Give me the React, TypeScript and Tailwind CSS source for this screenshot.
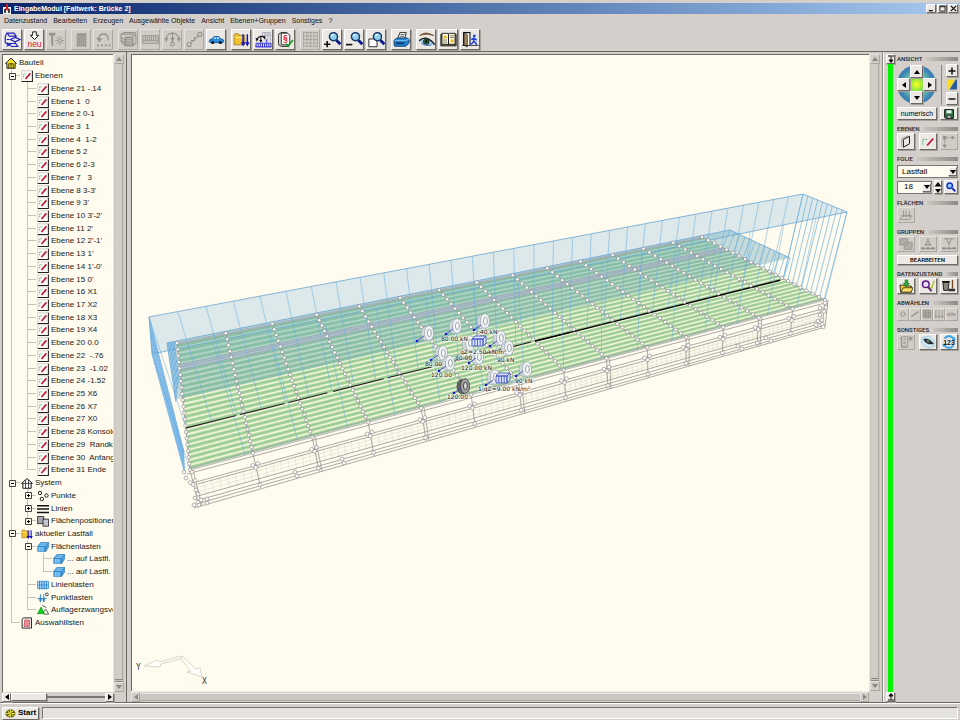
import React from "react";

type Pt = [number, number];
type Kids = { children?: React.ReactNode };

/* ------------------------------------------------------------------ */
/* Shared controls                                                     */
/* ------------------------------------------------------------------ */

const RAISED =
  "border border-t-white border-l-white border-r-[#6d6a65] border-b-[#6d6a65] bg-[#ece9e4] shadow-[1px_1px_0_#a5a29c]";
const FLAT =
  "border border-t-[#e6e3de] border-l-[#e6e3de] border-r-[#aaa7a1] border-b-[#aaa7a1] bg-[#d1cdc6]";

function Btn({
  label,
  off,
  className = "",
  children,
}: Kids & { label: string; off?: boolean; className?: string }) {
  return (
    <button
      type="button"
      aria-label={label}
      disabled={off}
      className={`flex shrink-0 items-center justify-center overflow-hidden ${off ? FLAT : RAISED} ${className}`}
    >
      {children}
    </button>
  );
}

function Ico({ children, className = "h-4 w-4" }: Kids & { className?: string }) {
  return (
    <svg viewBox="0 0 16 16" className={`${className} shrink-0`} fill="none" stroke="#111" aria-hidden="true">
      {children}
    </svg>
  );
}

function Arrow({ dir, off }: { dir: "up" | "down" | "left" | "right"; off?: boolean }) {
  const d = {
    up: "M1 6 L4 2 L7 6Z",
    down: "M1 2 L4 6 L7 2Z",
    left: "M6 1 L2 4 L6 7Z",
    right: "M2 1 L6 4 L2 7Z",
  }[dir];
  return (
    <svg viewBox="0 0 8 8" className="h-2 w-2 shrink-0" aria-hidden="true">
      <path d={d} fill={off ? "#8a8781" : "#000"} />
    </svg>
  );
}

/* ------------------------------------------------------------------ */
/* Toolbar icons                                                       */
/* ------------------------------------------------------------------ */

const G = "#95928c";

const Magnifier = ({ x = 0, y = 0 }: { x?: number; y?: number }) => (
  <g transform={`translate(${x} ${y})`}>
    <path d="M8 8 L12 12" stroke="#0a1a8c" strokeWidth="2.6" />
    <circle cx="5.5" cy="5" r="3.8" fill="#8fd0ee" stroke="#163a6a" strokeWidth="1.4" />
    <path d="M3.6 4.6 A2.2 2.2 0 0 1 5.8 2.8" stroke="#fff" strokeWidth="1" />
  </g>
);

const FolderArrows = () => (
  <>
    <path d="M1 4 V13 H11 V4 H6 L5 2.6 H2Z" fill="#f2c230" stroke="#8a6a10" strokeWidth=".7" />
    <path d="M1.6 6 H10" stroke="#ffe88a" />
    <path d="M9.5 3 V13 M13.5 3 V13" stroke="#1010c8" strokeWidth="1.4" />
    <path d="M7.4 10.5 H11.6 L9.5 14.5Z M11.4 10.5 H15.6 L13.5 14.5Z" fill="#1010c8" stroke="none" />
  </>
);

const icons: Record<string, React.ReactNode> = {
  flow: (
    <g stroke="#2222b8" strokeWidth="1.1">
      <path d="M3 2 H9.5 L11.5 4.8 H5Z M6 8 L10.5 6 L15 8 L10.5 10.2Z M5 11.8 H11 L13 14.6 H7Z" />
      <path d="M3 2 L1.2 5 V11 L4.5 13.2 M10.5 5 V6 M10.5 10 V11.8 M5 8 H2.5 M3 11 L5 13.2 L2.4 14.4" />
    </g>
  ),
  neu: (
    <>
      <path d="M6.3 0.8 H9.7 V4 H12 L8 8 L4 4 H6.3Z" fill="#fff" strokeWidth=".9" />
      <text x="8" y="15" textAnchor="middle" fontSize="8" fill="#e01818" stroke="none" fontFamily="Liberation Sans, sans-serif">
        neu
      </text>
    </>
  ),
  hammer: (
    <g stroke={G}>
      <path d="M1 3 H7" strokeWidth="2.6" />
      <path d="M4 3 V14" strokeWidth="1.8" />
      <path d="M11 4.5 V7 M11 11 V13.5 M6.8 9 H9 M13 9 H15.4 M8 6 L9.6 7.6 M12.4 10.4 L14 12 M14 6 L12.4 7.6 M9.6 10.4 L8 12" strokeWidth=".9" />
      <circle cx="11" cy="9" r="1.4" strokeWidth=".9" />
    </g>
  ),
  trash: (
    <g stroke={G}>
      <path d="M4 4.5 H12 V14 H4Z" fill="#a8a59f" />
      <path d="M3.5 3 H12.5" strokeWidth="1.6" />
      <path d="M6 6 V13 M8 6 V13 M10 6 V13" strokeWidth=".7" />
    </g>
  ),
  turn: (
    <g stroke={G}>
      <path d="M4 9 A4.4 4.4 0 1 1 12 9" strokeWidth="1.3" />
      <path d="M1.6 6.6 L4 10.4 L6.4 7.2Z" fill={G} strokeWidth=".5" />
      <path d="M2 13.5 H14.5" strokeWidth="1.8" strokeDasharray="1.8 1.8" />
    </g>
  ),
  slabs: (
    <g stroke={G}>
      <path d="M1 3 L4 1.5 H14 L15 4 V11 L12 14 H5 L1 10Z M1 3 H11 L15 5 M5 6 H12 V13 M5 6 V13 M5 8.5 H12 M5 11 H12 M1 6 L5 8.5 M1 8.5 L5 11" />
      <path d="M5 6 H12 V13 H5Z M5 8.3 H12 M5 10.6 H12" fill="#bbb8b2" />
    </g>
  ),
  beam: (
    <g stroke={G}>
      <path d="M.8 4.5 H15.2 V11.5 H.8Z M.8 9.2 H15.2" />
      <path d="M3 5 V9 M5 5 V9 M7 5 V9 M9 5 V9 M11 5 V9 M13 5 V9" />
    </g>
  ),
  swing: (
    <g stroke={G}>
      <path d="M2 8 A6 6 0 0 1 14 8 M8 1 V10" />
      <path d="M.5 6.5 L3.8 7 L2 10Z M15.5 6.5 L12.2 7 L14 10Z M6 6.5 H10 L8 10Z" fill={G} strokeWidth=".4" />
      <circle cx="8" cy="12.4" r="1.7" />
    </g>
  ),
  nodes: (
    <g stroke={G}>
      <circle cx="3" cy="12.8" r="1.9" />
      <circle cx="13" cy="3.2" r="1.9" />
      <path d="M4.4 11.4 L11.6 4.6" />
      <path d="M8 5.4 V9 H4.6" />
    </g>
  ),
  car: (
    <>
      <path d="M1 9.8 Q1 7.6 4 7.3 L5.6 5.2 H10.2 L12 7.3 Q15 7.6 15 9.8 L14 11 H2Z" fill="#2c8cdc" stroke="#0b4a8a" strokeWidth=".7" />
      <path d="M5.2 7.3 L6.3 5.9 H7.5 V7.3Z M8.3 7.3 V5.9 H9.8 L10.9 7.3Z" fill="#cfeaff" stroke="none" />
      <circle cx="4.4" cy="10.8" r="1.5" fill="#111" stroke="none" />
      <circle cx="11.6" cy="10.8" r="1.5" fill="#111" stroke="none" />
    </>
  ),
  folder: <FolderArrows />,
  moving: (
    <>
      <path d="M7 1.5 H14.5 V10 M7 1.5 V5 M9.5 1.5 V9 M12 1.5 V9 M7 4 H14.5" stroke="#9a9ab0" strokeWidth=".7" />
      <path d="M2 8 A4 4 0 0 1 8.5 6 M5.5 5 V10" strokeWidth="1" />
      <path d="M.5 6.6 L3.4 7.2 L1.6 10Z M7 5.5 L9.6 8 L9.6 4.6Z M4 8.5 H7 L5.5 11Z" fill="#111" stroke="none" />
      <path d="M1 15 V11.5 H15 V15 M3 12 V15 M5 12 V15 M7 12 V15 M9 12 V15 M11 12 V15 M13 12 V15 M.5 15 H15.5 M11 8 V11" stroke="#2222e0" strokeWidth=".9" />
    </>
  ),
  norm: (
    <>
      <path d="M1.5 4 V13 L4 14.5 H11 V4.5 L9 1.5 H4 L1.5 3Z" fill="#e6e6e0" strokeWidth=".8" />
      <path d="M4 2 H10 L12 4 V13 H4Z" fill="#fff" strokeWidth=".8" />
      <text x="7.8" y="9.6" textAnchor="middle" fontSize="8" fontWeight="700" fill="#e01818" stroke="none" fontFamily="Liberation Sans, sans-serif">
        §
      </text>
      <path d="M8.2 12 L10.5 14.3 L15 8.5" stroke="#18a028" strokeWidth="1.6" />
    </>
  ),
  grid: (
    <path
      d="M1 1.5 H15 M1 4.8 H15 M1 8 H15 M1 11.2 H15 M1 14.5 H15 M1.5 1 V15 M4.8 1 V15 M8 1 V15 M11.2 1 V15 M14.5 1 V15"
      stroke={G}
      strokeWidth=".8"
      strokeDasharray="1.5 .8"
    />
  ),
  zoomIn: (
    <>
      <Magnifier x={3.4} y={0.4} />
      <path d="M0 12.4 H6 M3 9.4 V15.4" strokeWidth="1.5" />
    </>
  ),
  zoomOut: (
    <>
      <Magnifier x={3.4} y={0.4} />
      <path d="M0 12.8 H6" strokeWidth="1.5" />
    </>
  ),
  zoomBox: (
    <>
      <path d="M.8 7.5 H8.5 V14.8 H.8Z" fill="#fff" strokeWidth=".8" />
      <Magnifier x={3.4} y={0.4} />
    </>
  ),
  printer: (
    <>
      <path d="M4.5 7 L6.5 1.5 H12.5 L11 7Z" fill="#fff" strokeWidth=".8" />
      <path d="M7 3.4 H11 M6.4 5 H10.4" strokeWidth=".6" />
      <path d="M1 8.5 L4 6.5 H13 L15.2 7.6 V11.4 L12 14.4 H1.6 L1 13Z" fill="#1f7cc8" stroke="#0b3a6a" strokeWidth=".8" />
      <path d="M1.4 8.8 H12 L15 7.8" stroke="#8ccdf4" strokeWidth=".9" />
      <path d="M3 11.6 H10.5" stroke="#0b2a50" strokeWidth="1.3" />
    </>
  ),
  eye: (
    <>
      <path d="M1.5 4.2 Q7 -.6 15 4.4 Q8.5 1.6 1.5 4.2Z" fill="#6a4422" stroke="#6a4422" strokeWidth=".6" />
      <path d="M1 9.5 Q7 4 13.5 10.4 Q15 11.6 15.5 13 Q8 15 3.5 11.8Z" fill="#a8c8e8" stroke="none" />
      <path d="M1 9.2 Q7 3.8 13.5 10.2 Q15 11.6 15.5 13" strokeWidth="1.3" />
      <circle cx="7.8" cy="10" r="2.7" fill="#2a6a3a" stroke="#112" strokeWidth=".7" />
      <circle cx="7.8" cy="9.8" r="1.1" fill="#000" stroke="none" />
      <path d="M3.5 11.8 Q8 14.6 12.5 13" stroke="#4a7ab8" strokeWidth="1" />
    </>
  ),
  book: (
    <>
      <path d="M.8 3 H15.2 V14 H.8Z" fill="#8a7a48" strokeWidth=".8" />
      <path d="M1.8 2.2 H7.5 L8 3 L8.5 2.2 H14.2 V12.5 H8.6 L8 13.2 L7.4 12.5 H1.8Z" fill="#fff8d8" strokeWidth=".8" />
      <path d="M8 3 V13" strokeWidth=".9" />
      <path d="M3.2 4.5 H6.2 V7 H3.2Z M10 8 H12.8 V10.5 H10Z" fill="#e8b820" stroke="none" />
      <path d="M3 8.5 H6.5 M3 10.5 H6.5 M9.6 4.5 H13 M9.6 6.2 H13" stroke="#666" strokeWidth=".8" />
    </>
  ),
  exit: (
    <>
      <path d="M1.5 13.5 V1.5 H7.5 V13.5" fill="#fff" strokeWidth="1" />
      <path d="M2 2 L5 3.5 V15 L2 13.5Z" fill="#a88a58" strokeWidth=".6" />
      <path d="M0 13.6 H15.8" strokeWidth=".7" />
      <circle cx="11.6" cy="4.6" r="1.3" fill="#2244d8" stroke="none" />
      <path d="M11.4 6 L11 9.6 L13 11.2 L13.6 13.4 M11 9.6 L9.8 11.4 L7.8 12.6 M8.6 8.2 L11.2 6.8 L14 8.6" stroke="#2244d8" strokeWidth="1.4" />
    </>
  ),
};

type Tool = [string, string, boolean?];
const toolGroups: Tool[][] = [
  [["flow", "Ablauf"], ["neu", "Neu"], ["hammer", "Bearbeiten", true]],
  [["trash", "Löschen", true], ["turn", "Rückgängig", true]],
  [
    ["slabs", "Platten", true],
    ["beam", "Balken", true],
    ["swing", "Drehen", true],
    ["nodes", "Knoten", true],
    ["car", "Verkehrslast"],
  ],
  [["folder", "Lastfall"], ["moving", "Lastzug"], ["norm", "Norm"]],
  [["grid", "Raster", true], ["zoomIn", "Vergrößern"], ["zoomOut", "Verkleinern"], ["zoomBox", "Ausschnitt"]],
  [["printer", "Drucken"]],
  [["eye", "Anzeigen"], ["book", "Handbuch"], ["exit", "Beenden"]],
];

const menus = [
  "Datenzustand",
  "Bearbeiten",
  "Erzeugen",
  "Ausgewählte Objekte",
  "Ansicht",
  "Ebenen+Gruppen",
  "Sonstiges",
  "?",
];

/* ------------------------------------------------------------------ */
/* Object tree                                                         */
/* ------------------------------------------------------------------ */

const PlaneIcon = () => (
  <>
    <path d="M1 1 H15.5 V15.5 H1Z" fill="#fbfaf6" stroke="#b8b5ae" strokeWidth=".8" />
    <path d="M1 15.2 H15.2 V1" stroke="#222" strokeWidth="1.4" />
    <path d="M3.5 10 V5 H7.5" stroke="#58c070" strokeWidth="1.2" strokeDasharray="2 1" />
    <path d="M6 12 L12.5 4.5" stroke="#c01830" strokeWidth="2.2" />
  </>
);

const LoadBlock = () => (
  <>
    <path d="M1 7 L5 2 H15.5 V8 L11.5 14 H1Z" fill="#4aa4e4" stroke="#1c6cac" strokeWidth=".8" />
    <path d="M1 7 H11.5 V14 M11.5 7 L15.5 2" stroke="#1c6cac" strokeWidth=".8" />
    <path d="M3 8 V14 M5.5 8 V14 M8 8 V14" stroke="#bfe4ff" strokeWidth=".9" />
    <path d="M3 5.8 H12 M5 3.8 H14" stroke="#bfe4ff" strokeWidth=".7" />
  </>
);

const treeIcons: Record<string, React.ReactNode> = {
  house: (
    <>
      <path d="M.8 8.5 L8 1.5 L15.2 8.5 H13.5 V15 H2.5 V8.5Z" fill="#f6e020" stroke="#222" strokeWidth="1.3" />
      <path d="M5 9 H11 V15 M5 9 V15 M8 9 V15" strokeWidth="1" />
    </>
  ),
  plane: <PlaneIcon />,
  system: (
    <>
      <path d="M.8 8.5 L8 2 L15.2 8.5 H13.5 V15 H2.5 V8.5Z" fill="#fff" strokeWidth="1.3" />
      <path d="M2.5 8.5 H13.5 M6 4 V15 M10 4 V15" strokeWidth="1" />
    </>
  ),
  points: (
    <g strokeWidth="1.2">
      <circle cx="4" cy="4" r="2.3" />
      <circle cx="12.6" cy="7.4" r="2.3" />
      <circle cx="6.5" cy="12" r="2.3" />
    </g>
  ),
  lines: <path d="M0 3.5 H16 M0 8 H16 M0 12.5 H16" strokeWidth="2" />,
  areas: (
    <g strokeWidth="1">
      <path d="M.8 2 H9 V11.5 H.8Z" fill="#a8a8b0" />
      <path d="M8 5.5 H15.4 V15 H8Z" fill="#c4c4cc" />
    </g>
  ),
  folder: <FolderArrows />,
  block: <LoadBlock />,
  lineload: (
    <g stroke="#2a86cc" strokeWidth="1">
      <path d="M.6 3 H15.4 V12.5 H.6Z" fill="#bfe2f8" />
      <path d="M3.5 3 V14 M6.5 3 V14 M9.5 3 V14 M12.5 3 V14" strokeWidth="1.4" />
      <path d="M0 8 H16" />
    </g>
  ),
  pointload: (
    <>
      <path d="M4.5 3 V13 M9 3 V13 M.5 8.5 H13" stroke="#1c7cc4" strokeWidth="1.2" />
      <path d="M2.5 9.5 H6.5 L4.5 14Z M7 9.5 H11 L9 14Z" fill="#1c7cc4" stroke="none" />
      <circle cx="13.2" cy="3.2" r="1.9" />
    </>
  ),
  support: (
    <>
      <path d="M.5 13 L5.5 4 L10 13Z" fill="#10d020" stroke="#0a8a14" strokeWidth=".8" />
      <path d="M8.5 11 L12 7 L15.5 13.5 H9.5 M7 2 L12.5 4.5" strokeWidth=".9" />
    </>
  ),
  list: (
    <>
      <path d="M3 1.2 H14 V14.8 H1.5 V3Z" fill="#fff" strokeWidth="1.2" />
      <path d="M5 4 H11.5 V12.5 H4Z" fill="#e89098" stroke="#c02030" strokeWidth=".8" />
    </>
  ),
};

/* Guides: t = tee, e = end, v = vertical; a + or - prefix adds the toggle box */
type Row = { icon: string; text: string; guides: string[] };

const planes = [
  "Ebene 21 -.14", "Ebene 1  0", "Ebene 2 0-1", "Ebene 3  1", "Ebene 4  1-2", "Ebene 5 2", "Ebene 6 2-3",
  "Ebene 7   3", "Ebene 8 3-3'", "Ebene 9 3'", "Ebene 10 3'-2'", "Ebene 11 2'", "Ebene 12 2'-1'", "Ebene 13 1'",
  "Ebene 14 1'-0'", "Ebene 15 0'", "Ebene 16 X1", "Ebene 17 X2", "Ebene 18 X3", "Ebene 19 X4", "Ebene 20 0.0",
  "Ebene 22  -.76", "Ebene 23  -1.02", "Ebene 24 -1.52", "Ebene 25 X6", "Ebene 26 X7", "Ebene 27 X0",
  "Ebene 28 Konsole", "Ebene 29  Randkappe", "Ebene 30  Anfang", "Ebene 31 Ende",
];

const rows: Row[] = [
  { icon: "house", text: "Bauteil", guides: [] },
  { icon: "plane", text: "Ebenen", guides: ["-t"] },
  ...planes.map((text, i) => ({ icon: "plane", text, guides: ["v", i === planes.length - 1 ? "e" : "t"] })),
  { icon: "system", text: "System", guides: ["-t"] },
  { icon: "points", text: "Punkte", guides: ["v", "+t"] },
  { icon: "lines", text: "Linien", guides: ["v", "+t"] },
  { icon: "areas", text: "Flächenpositionen", guides: ["v", "+e"] },
  { icon: "folder", text: "aktueller Lastfall", guides: ["-t"] },
  { icon: "block", text: "Flächenlasten", guides: ["v", "-t"] },
  { icon: "block", text: "... auf Lastfl.", guides: ["v", "v", "t"] },
  { icon: "block", text: "... auf Lastfl.", guides: ["v", "v", "e"] },
  { icon: "lineload", text: "Linienlasten", guides: ["v", "t"] },
  { icon: "pointload", text: "Punktlasten", guides: ["v", "t"] },
  { icon: "support", text: "Auflagerzwangsverf.", guides: ["v", "e"] },
  { icon: "list", text: "Auswahllisten", guides: ["e"] },
];

function Guide({ kind }: { kind: string }) {
  const shape = kind[kind.length - 1];
  const box = kind.length > 1 ? kind[0] : "";
  return (
    <span className="relative flex h-full w-4 shrink-0">
      <span className={`w-2 border-r border-[#c5c2ba] ${shape === "e" ? "h-1/2" : "h-full"}`} />
      <span className={`h-1/2 w-2 ${shape === "v" ? "" : "border-b border-[#c5c2ba]"}`} />
      {box && (
        <svg viewBox="0 0 7 7" className="absolute inset-0 m-auto h-[7px] w-[7px]" aria-hidden="true">
          <path d="M.5 .5 H6.5 V6.5 H.5Z" fill="#fffbee" stroke="#444" />
          <path d={box === "+" ? "M2 3.5 H5 M3.5 2 V5" : "M2 3.5 H5"} stroke="#000" />
        </svg>
      )}
    </span>
  );
}

function Tree() {
  return (
    <ul className="flex h-[574px] shrink-0 flex-col pt-[2px] pl-px text-[8px] leading-none whitespace-pre text-[#222]">
      {rows.map((r, i) => (
        <li key={i} className="flex min-h-0 flex-1 items-center">
          {r.guides.map((g, k) => (
            <Guide key={k} kind={g} />
          ))}
          <span className="flex items-center gap-[2px] pl-px">
            <Ico className="h-3 w-3">{treeIcons[r.icon]}</Ico>
            <span>{r.text}</span>
          </span>
        </li>
      ))}
    </ul>
  );
}

/* ------------------------------------------------------------------ */
/* Bridge model                                                        */
/* ------------------------------------------------------------------ */

/* Interpolation along an edge seen in perspective; k is the depth ratio. */
function along(a: Pt, b: Pt, u: number, k: number): Pt {
  const w = 1 - u + k * u;
  return [((1 - u) * a[0] + k * u * b[0]) / w, ((1 - u) * a[1] + k * u * b[1]) / w];
}
const mix = (a: Pt, b: Pt, t: number): Pt => [a[0] + (b[0] - a[0]) * t, a[1] + (b[1] - a[1]) * t];
const f = (n: number) => n.toFixed(1);
const seg = (a: Pt, b: Pt) => `M${f(a[0])} ${f(a[1])}L${f(b[0])} ${f(b[1])}`;
const poly = (...p: Pt[]) => p.map((q) => `${f(q[0])},${f(q[1])}`).join(" ");
const range = (n: number) => Array.from({ length: n }, (_, i) => i);

const BL: Pt = [177, 343];
const BR: Pt = [702, 237];
const FL: Pt = [190, 470];
const FR: Pt = [825, 300];
const deck = (u: number, t: number): Pt => mix(along(BL, BR, u, 1.33), along(FL, FR, u, 1.43), t);

const LTL: Pt = [149, 317];
const LTR: Pt = [803, 194];
const LFL: Pt = [152, 354];
const LFR: Pt = [847, 212];

const BAYS = 14;
const STRIPES = 25;

const stripes = range(STRIPES).map((i) => {
  const a = (i + 0.2) / STRIPES;
  const b = (i + 0.84) / STRIPES;
  return poly(deck(0, a), deck(1, a), deck(1, b), deck(0, b));
});
const stripeEdges = range(STRIPES)
  .map((i) => seg(deck(0, (i + 0.5) / STRIPES), deck(1, (i + 0.5) / STRIPES)))
  .join("");
const beams = range(BAYS + 1).map((i) => seg(deck(i / BAYS, 0), deck(i / BAYS, 1))).join("");
const subBeams = range(BAYS * 4).map((i) => seg(deck(i / (BAYS * 4), 0.2), deck(i / (BAYS * 4), 0.98))).join("");
const nodes: Pt[] = range(BAYS + 1).flatMap((i) => range(21).map((j) => deck(i / BAYS, j / 20)));
const lanes = [0, 0.012, 0.17, 0.19, 0.21, 0.985, 1].map((t) => seg(deck(0, t), deck(1, t))).join("");

const fascia: [Pt, Pt][] = [
  [[187, 474], [825, 303]],
  [[196, 482], [822, 309]],
  [[198, 484], [822, 312]],
  [[198, 496], [822, 320]],
  [[199, 500], [822, 323]],
  [[200, 503], [822, 326]],
  [[194, 508], [822, 328]],
];
const fasciaLines = fascia.map(([a, b]) => seg(a, b)).join("");
const meshLines =
  range(112).map((i) => seg(along([196, 484], [822, 312], i / 112, 1.43), along([198, 497], [822, 321], i / 112, 1.43))).join("") +
  seg([196, 488], [822, 315]) +
  seg([197, 492], [822, 318]);
const postTop = (u: number) => along(FL, FR, u, 1.43);
const postEnd = (u: number) => {
  const p = along([195, 507], [822, 328], u, 1.43);
  return [p[0] + 4 * (1 - u), p[1] - 1] as Pt;
};
const posts = range(BAYS + 1)
  .map((i) => {
    const a = postTop(i / BAYS);
    const b = postEnd(i / BAYS);
    return seg(a, b) + (i % 2 === 0 ? seg([a[0] + 3, a[1]], [b[0] + 3, b[1]]) : "");
  })
  .join("");
const postNodes: Pt[] = range(BAYS + 1).flatMap((i) => {
  const a = postTop(i / BAYS);
  const b = postEnd(i / BAYS);
  const m = mix(a, b, 0.35);
  const e = mix(a, b, 0.9);
  return [[m[0] - 3, m[1]], [m[0], m[1] + 2], [m[0] + 2, m[1] - 2], e] as Pt[];
});
const extraNodes: Pt[] = [
  [295, 472], [297, 476], [342, 459], [344, 463], [196, 490], [198, 494], [195, 498], [194, 505], [201, 500],
  [207, 499], [207, 503], [199, 505], [738, 346], [742, 349], [766, 338], [771, 341], [820, 315], [822, 320],
  [816, 325], [823, 327], [818, 321], [184, 472], [186, 478], [192, 472], [820, 308], [825, 303],
];

const tallBack = range(33).map((i) => seg(along(LTL, LTR, i / 32, 1.43), deck(i / 32, 0.66))).join("");
const tallFront = range(17).map((i) => seg(along(LFL, LFR, i / 16, 1.43), deck(i / 16, 1))).join("");
const rightFan = range(10).map((i) => seg(mix(LTR, LFR, i / 9), deck(1, 0.66 + 0.037 * i))).join("");
const leftFan = range(8).map((i) => seg(mix(LTL, LFL, i / 7), mix([184, 452], [185, 474], i / 7))).join("");
const lowBox: Pt[] = [[167, 343], [730, 230], [790, 258], [175, 400]];
const lowRight = range(13).map((i) => seg(mix([730, 230], [790, 258], i / 12), deck(1, 0.17 + i * 0.041))).join("");
const lowLeft = range(6).map((i) => seg(mix([167, 343], [174, 342], i / 5), mix([176, 402], [179, 380], i / 5))).join("");

const wheels: Pt[] = [
  [484, 321], [456, 326], [428, 333], [500, 338], [469, 343], [508, 348], [442, 353], [478, 357], [449, 363],
  [526, 369], [494, 377],
];
const arrows: Pt[] = [
  [417, 341], [446, 334], [474, 330], [490, 346], [431, 360], [439, 371], [469, 363], [516, 376], [486, 385], [454, 393],
];
const labels: [number, number, string][] = [
  [441, 341, "80.00 kN"], [478, 334, ".40 kN"], [460, 354, "qZ=2.50 kN/m²"], [455, 360, "80.00"], [495, 362, ".90 kN"],
  [425, 366, "80.00"], [461, 370, "120.00 kN"], [431, 377, "120.00"], [513, 383, ".90 kN"],
  [478, 391, "1 qZ=9.00 kN/m²"], [447, 399, "120.00"],
];

function Wheel({ p, dark }: { p: Pt; dark?: boolean }) {
  return (
    <g transform={`translate(${p[0]} ${p[1]})`}>
      <ellipse cx="-2" cy=".6" rx="5" ry="7.2" fill={dark ? "#666" : "#d0d8dc"} stroke={dark ? "#333" : "#9aa6ac"} strokeWidth=".7" />
      <ellipse cx="1" cy="0" rx="4.6" ry="7.4" fill={dark ? "#a0a0a0" : "#eff2f4"} stroke={dark ? "#333" : "#9aa4aa"} strokeWidth=".7" />
      <ellipse cx="1.4" cy="0" rx="1.9" ry="3.6" fill={dark ? "#ddd" : "#fff"} stroke={dark ? "#222" : "#7c888e"} strokeWidth=".8" />
    </g>
  );
}

function LoadGlyph({ x, y }: { x: number; y: number }) {
  return (
    <g transform={`translate(${x} ${y})`} fill="#d8e2fa" stroke="#3a4cc0" strokeWidth=".8">
      <path d="M0 3 L3 0 H14 L11 3Z M11 3 L14 0 V7 L11 10Z M0 3 H11 V10 H0Z" />
      <path d="M2.8 3 V10 M5.5 3 V10 M8.2 3 V10" />
    </g>
  );
}

function Model() {
  return (
    <svg viewBox="132 56 737 634" className="block h-full w-full" role="img" aria-label="Faltwerk Brücke 2" fill="none">
      <polygon points={poly(LTL, LTR, LFR, LFL)} fill="#dce8ea" />
      <polygon points={poly(deck(0, 0), deck(1, 0), deck(1, 1), deck(0, 1))} fill="#f1f4da" />
      {stripes.map((s, i) => (
        <polygon key={i} points={s} fill="#a6d69a" />
      ))}
      <path d={stripeEdges} stroke="#93bd94" strokeWidth=".6" />
      <path d={subBeams} stroke="#b4bda6" strokeWidth=".5" strokeDasharray="1.5 1.5" opacity=".7" />
      <polygon points={poly(deck(0, 0.17), deck(1, 0.17), deck(1, 0.215), deck(0, 0.215))} fill="#ccd0e2" opacity=".8" />
      <polygon points={poly(...lowBox)} fill="#6aa8b8" opacity=".38" />
      <polygon points={poly(deck(0, 0), deck(1, 0), deck(1, 0.17), deck(0, 0.17))} fill="#7cc0b8" opacity=".18" />
      <path d={lanes} stroke="#a4a4b0" strokeWidth=".8" />
      <path d={meshLines} stroke="#e2dfd0" strokeWidth=".7" />
      <path d={fasciaLines} stroke="#979590" strokeWidth=".8" />
      <path d={posts} stroke="#979590" strokeWidth=".8" />
      <path d={beams} stroke="#9a9ca4" strokeWidth=".9" />

      <path d={seg(deck(0, 0.67), deck(0.56, 0.67))} stroke="#222" strokeWidth="1.1" strokeDasharray="52 4 46 4 40 6" />
      <path d={seg(deck(0.5, 0.67), deck(0.99, 0.67))} stroke="#000" strokeWidth="1.4" />

      <path d={tallBack} stroke="#6aaee0" strokeWidth=".7" opacity=".75" />
      <path d={tallFront} stroke="#6aaee0" strokeWidth=".7" opacity=".7" />
      <path d={leftFan + lowLeft} stroke="#5aa6e4" strokeWidth=".8" />
      <path d={rightFan + lowRight} stroke="#6cb0e0" strokeWidth=".7" />
      <path
        d={seg(LTL, LTR) + seg(LTR, LFR) + seg(LFR, LFL) + seg(LTL, LFL) + seg([730, 230], [790, 258]) + seg([167, 343], [730, 230])}
        stroke="#6aa6d2"
        strokeWidth=".8"
      />
      <g fill="#fdfdf8" stroke="#84828a" strokeWidth=".6">
        {nodes.map((p, i) => (
          <circle key={i} cx={f(p[0])} cy={f(p[1])} r="1.7" />
        ))}
        {postNodes.concat(extraNodes).map((p, i) => (
          <circle key={i} cx={f(p[0])} cy={f(p[1])} r="1.9" />
        ))}
      </g>

      {wheels.map((p, i) => (
        <Wheel key={i} p={p} />
      ))}
      <Wheel p={[464, 386]} dark />
      <LoadGlyph x={472} y={336} />
      <LoadGlyph x={496} y={373} />
      {arrows.map(([x, y], i) => (
        <g key={i} stroke="#2a34d0" strokeWidth=".8">
          <path d={`M${x} ${y} l7 -5`} />
          <circle cx={x} cy={y} r="1.3" fill="#1616e0" stroke="none" />
        </g>
      ))}
      <g fontSize="6" fill="#222" stroke="#fff" strokeWidth="1.6" strokeOpacity=".65" paintOrder="stroke" fontFamily="DejaVu Sans, sans-serif">
        {labels.map(([x, y, t]) => (
          <text key={`${x}-${y}`} x={x} y={y}>
            {t}
          </text>
        ))}
      </g>

      <g stroke="#cfccc4" strokeWidth=".8" fill="#fffef8">
        <path d="M144 666 L157 660 L160 662 L181 656 L183 658 L161 664 L160 667Z" />
        <path d="M182 656 L196 669 L200 668 L202 677 L187 672 L191 671 L181 659Z" />
      </g>
      <g fontSize="8" fill="#333" fontFamily="DejaVu Sans Mono, monospace">
        <text x="136" y="670">Y</text>
        <text x="202" y="684">X</text>
      </g>
    </svg>
  );
}

/* ------------------------------------------------------------------ */
/* Right-hand tool panel                                               */
/* ------------------------------------------------------------------ */

function Section({ title, children }: Kids & { title: string }) {
  return (
    <section>
      <h2 className="flex h-2 items-center gap-1 font-[Roboto,sans-serif] text-[6px] leading-none font-medium text-[#222]">
        {title}
        <span className="h-1 flex-1 bg-linear-to-r from-[#cbc8c2] to-[#8e8b86]" />
      </h2>
      {children}
    </section>
  );
}

const panelBtn = "h-4 w-[18px]";

function Panel() {
  return (
    <aside className="flex w-[63px] shrink-0 flex-col gap-[5px] pr-[2px]">
      <Section title="ANSICHT">
        <div className="flex h-[43px] items-center justify-between">
          <div className="grid grid-cols-3 place-items-center rounded-full bg-[radial-gradient(circle,#ffff20_0%,#8ee83c_22%,#6ac8a0_36%,#3f86b8_60%,#2c5c98_100%)]">
            <span />
            <Btn label="Nach oben" className="h-[13px] w-[13px]"><Arrow dir="up" /></Btn>
            <span />
            <Btn label="Nach links" className="h-[13px] w-[13px]"><Arrow dir="left" /></Btn>
            <span />
            <Btn label="Nach rechts" className="h-[13px] w-[13px]"><Arrow dir="right" /></Btn>
            <span />
            <Btn label="Nach unten" className="h-[13px] w-[13px]"><Arrow dir="down" /></Btn>
            <span />
          </div>
          <span className="h-10 w-px bg-[#8a8782]" />
          <div className="flex flex-col items-center gap-px">
            <Btn label="Näher" className="h-[13px] w-3"><Ico className="h-2 w-2"><path d="M1 8 H15 M8 1 V15" strokeWidth="3" /></Ico></Btn>
            <button type="button" aria-label="Farben" className="flex h-[13px] w-3 items-center justify-center">
              <Ico className="h-[11px] w-[10px]">
                <path d="M0 0 H13 L3 16 H0Z" fill="#f8e020" stroke="none" />
                <path d="M14 0 H16 V16 H4Z" fill="#2c5c98" stroke="none" />
              </Ico>
            </button>
            <Btn label="Weiter weg" className="h-[13px] w-3"><Ico className="h-2 w-2"><path d="M1 8 H15" strokeWidth="3" /></Ico></Btn>
          </div>
        </div>
        <div className="flex justify-between pt-px">
          <button type="button" className={`h-[13px] w-10 text-[7px] leading-none ${RAISED}`}>numerisch</button>
          <Btn label="Ansicht speichern" className="h-[13px] w-[18px]">
            <Ico className="h-[10px] w-[10px]">
              <path d="M1 1 H15 V15 H3 L1 13Z" fill="#2c7a40" strokeWidth="1.6" />
              <path d="M4 2 H12 V7 H4Z" fill="#e8f0e8" stroke="none" />
              <path d="M5 10 H11 V15 H5Z" fill="#bbb" />
            </Ico>
          </Btn>
        </div>
      </Section>

      <Section title="EBENEN">
        <div className="flex h-[17px] justify-between">
          <Btn label="Ebene wählen" className="h-[17px] w-[18px]">
            <Ico className="h-[14px] w-[14px]"><path d="M5 5 L12 1.5 V10 L5 14Z" strokeWidth="1.1" /><path d="M3 13 V4 L10 1" strokeWidth=".7" stroke="#777" /></Ico>
          </Btn>
          <Btn label="Ebene bearbeiten" className="h-[17px] w-[18px]">
            <Ico className="h-[14px] w-[14px]">
              <path d="M2 11 V5 H7" stroke="#40b060" strokeDasharray="2 1" />
              <path d="M7 12 L14 4" stroke="#c01830" strokeWidth="2" />
            </Ico>
          </Btn>
          <Btn label="Ebene verschieben" off className="h-[17px] w-[18px]">
            <Ico className="h-[14px] w-[14px]"><path d="M3 13 V3 H13" stroke={G} strokeDasharray="3 1" /><path d="M1 1 H5 V5 H1Z M11 .5 L15 3 L11 5.500Z M.5 11 L3 15 L5.500 11Z" fill={G} stroke="none" /></Ico>
          </Btn>
        </div>
      </Section>

      <Section title="FOLIE">
        <div className="flex flex-col gap-[2px] pt-[2px]">
          <label className="flex h-[13px] items-center border border-[#777] bg-[#fffbee]">
            <span className="sr-only">Folie</span>
            <select className="h-full min-w-0 flex-1 appearance-none pl-1 text-[8px] leading-none outline-none" defaultValue="Lastfall">
              <option>Lastfall</option>
            </select>
            <span className={`flex h-[9px] w-[9px] items-center justify-center ${RAISED}`}><Arrow dir="down" /></span>
          </label>
          <div className="flex h-[14px] items-center justify-between">
            <label className="flex h-[13px] w-[35px] items-center border border-[#777] bg-[#fffbee]">
              <span className="sr-only">Foliennummer</span>
              <select className="h-full min-w-0 flex-1 appearance-none pl-[6px] text-[8px] leading-none outline-none" defaultValue="18">
                <option>18</option>
              </select>
              <span className={`flex h-[9px] w-[9px] items-center justify-center ${RAISED}`}><Arrow dir="down" /></span>
            </label>
            <div className="flex flex-col">
              <Btn label="Höher" className="h-[7px] w-2"><Arrow dir="up" /></Btn>
              <Btn label="Tiefer" className="h-[7px] w-2"><Arrow dir="down" /></Btn>
            </div>
            <Btn label="Folie suchen" className="h-[14px] w-[14px]">
              <Ico className="h-[10px] w-[10px]">
                <circle cx="6" cy="6" r="4.4" fill="#8fc8ff" stroke="#1030c0" strokeWidth="2.4" />
                <path d="M10 10 L15 15" stroke="#1030c0" strokeWidth="3" />
              </Ico>
            </Btn>
          </div>
        </div>
      </Section>

      <Section title="FLÄCHEN">
        <Btn label="Flächenlast" off className={panelBtn}>
          <Ico className="h-[14px] w-[14px]"><path d="M1 13 L4 9 H15 L12 13Z M5 3 V10 M8 3 V10 M12 3 V10 M3 8 L5 10 L7 8 M6 8 L8 10 L10 8 M10 8 L12 10 L14 8" stroke={G} /></Ico>
        </Btn>
      </Section>

      <Section title="GRUPPEN">
        <div className="flex h-[17px] justify-between">
          <Btn label="Gruppe bilden" off className={panelBtn}>
            <Ico className="h-[14px] w-[14px]">
              <path d="M1 2 H10 V9 H1Z M6 6 H15 V14 H6Z" fill="#bab7b1" stroke={G} />
              <path d="M1 5 L4 2 M1 8 L7 2 M4 9 L10 3 M7 13 L14 6 M10 14 L15 9" stroke={G} strokeWidth=".8" />
            </Ico>
          </Btn>
          <Btn label="Gruppe auflösen" off className={panelBtn}>
            <Ico className="h-[14px] w-[14px]"><path d="M5 9 L8 4 L11 9Z M8 1 V4 M0 13 H16" stroke={G} strokeWidth="1.2" /><path d="M1 12 H3 V14 H1Z M7 12 H9 V14 H7Z M13 12 H15 V14 H13Z" stroke={G} fill={G} strokeWidth=".6" /></Ico>
          </Btn>
          <Btn label="Gruppe trennen" off className={panelBtn}>
            <Ico className="h-[14px] w-[14px]"><path d="M2 2 H14 M5 2 L8 8 L11 2 M8 8 V10 M0 13 H16" stroke={G} strokeWidth="1.2" /><path d="M1 12 H3 V14 H1Z M7 12 H9 V14 H7Z M13 12 H15 V14 H13Z" stroke={G} fill={G} strokeWidth=".6" /></Ico>
          </Btn>
        </div>
        <div className="flex pt-[2px]">
          <button type="button" className={`h-[10px] flex-1 font-[Roboto,sans-serif] text-[6px] leading-none font-medium ${RAISED}`}>BEARBEITEN</button>
        </div>
      </Section>

      <Section title="DATENZUSTAND">
        <div className="flex justify-between">
          <Btn label="Laden" className={panelBtn}>
            <Ico className="h-[14px] w-[14px]">
              <path d="M1 7 H6 L7 8 H14 V15 H2Z" fill="#f2c230" strokeWidth=".9" />
              <path d="M2 15 L5 10 H16 L14 15Z" fill="#ffe060" strokeWidth=".8" />
              <path d="M7 1 H10 V5 H12 L8 9 L5 5 H7Z" fill="#28b038" stroke="#0c6a18" strokeWidth=".7" />
            </Ico>
          </Btn>
          <Btn label="Prüfen" className={panelBtn}>
            <Ico className="h-[14px] w-[14px]">
              <circle cx="5.5" cy="6" r="3.8" fill="#e8e0f8" stroke="#5a1880" strokeWidth="1.7" />
              <path d="M8 9 L12 14" stroke="#5a1880" strokeWidth="2.2" />
              <path d="M11 9 L12 11 L15 2" stroke="#a8c820" strokeWidth="1.6" />
            </Ico>
          </Btn>
          <Btn label="Aufräumen" className={panelBtn}>
            <Ico className="h-[14px] w-[14px]">
              <path d="M1 4 H8 L7 13 H2Z" fill="#8a867c" />
              <path d="M0 3 H9" strokeWidth="1.4" />
              <path d="M12 1 V11" stroke="#7a4a20" strokeWidth="1.6" />
              <path d="M8 11 H15 V14 H7Z" fill="#333" stroke="none" />
            </Ico>
          </Btn>
        </div>
      </Section>

      <Section title="ABWÄHLEN">
        <div className="flex h-[14px] items-center">
          <Btn label="Punkte abwählen" off className="h-[13px] w-3"><Ico className="h-[10px] w-[10px]"><circle cx="8" cy="8" r="3.4" stroke={G} strokeWidth="1.5" /></Ico></Btn>
          <Btn label="Linien abwählen" off className="h-[13px] w-3"><Ico className="h-[10px] w-[10px]"><path d="M2 12 L14 4" stroke={G} strokeWidth="2" /></Ico></Btn>
          <Btn label="Flächen abwählen" off className="h-[13px] w-3"><Ico className="h-[10px] w-[10px]"><path d="M2 2 H14 V14 H2Z M2 6 H14 M2 10 H14 M6 2 V14 M10 2 V14" fill="#b0ada7" stroke={G} strokeWidth="1.5" /></Ico></Btn>
          <Btn label="Lasten abwählen" off className="h-[13px] w-3"><Ico className="h-[10px] w-[10px]"><path d="M3 2 V14 M8 2 V14 M13 2 V14 M1 11 L3 14 L5 11 M6 11 L8 14 L10 11 M11 11 L13 14 L15 11" stroke={G} strokeWidth="1.5" /></Ico></Btn>
          <Btn label="Alle abwählen" off className="h-[13px] w-[13px] text-[6px] leading-none text-[#85827c]">alle</Btn>
        </div>
      </Section>

      <Section title="SONSTIGES">
        <div className="flex justify-between">
          <Btn label="Protokoll" off className={panelBtn}>
            <Ico className="h-[14px] w-[14px]"><path d="M1 4 H3 V14 H10 M3 2 H10 V13 H3Z M5 5 H8 M5 8 H8 M5 10 H8 M13 1 V7 M11 4 H16 M11 2 L15 6 M15 2 L11 6" stroke={G} /></Ico>
          </Btn>
          <Btn label="Ansehen" className={panelBtn}>
            <Ico className="h-[14px] w-[14px]">
              <path d="M1 3 L9 1 L15 6 V13 L8 15 L1 10Z" fill="#cfeaf6" stroke="#88b8d0" strokeWidth=".7" />
              <path d="M3 5 Q9 3 14 10 Q8 11 5 8Z" fill="#334" stroke="#111" strokeWidth=".8" />
              <circle cx="8" cy="7" r="1.4" fill="#5a9a50" stroke="none" />
            </Ico>
          </Btn>
          <Btn label="Nummerierung" className={panelBtn}>
            <Ico className="h-[14px] w-[16px]">
              <path d="M3 4 A6 6 0 0 1 13 4 M13 12 A6 6 0 0 1 3 12" stroke="#3aa4e4" strokeWidth="2.4" />
              <path d="M0 10 L5 10 L2 14Z M16 6 L11 6 L14 2Z" fill="#3aa4e4" stroke="none" />
              <text x="8" y="11" textAnchor="middle" fontSize="8" fontWeight="700" fill="#111" stroke="none" fontFamily="Liberation Sans, sans-serif">123</text>
            </Ico>
          </Btn>
        </div>
      </Section>
    </aside>
  );
}

/* ------------------------------------------------------------------ */
/* Scroll bars                                                         */
/* ------------------------------------------------------------------ */

function VScroll() {
  return (
    <div className="flex w-[11px] shrink-0 flex-col items-center border-l border-[#e8e5e0] bg-[#cbc7c0]">
      <Btn label="Nach oben blättern" off className="h-[10px] w-[10px]"><Arrow dir="up" off /></Btn>
      <span className="w-[8px] flex-1 border-r border-[#aaa7a1] bg-[#d1cec8]" />
      <span className="h-[3px] w-[8px] border-y border-[#8a8781]" />
      <Btn label="Nach unten blättern" off className="h-[10px] w-[10px]"><Arrow dir="down" off /></Btn>
    </div>
  );
}

/* ------------------------------------------------------------------ */
/* Window                                                              */
/* ------------------------------------------------------------------ */

export default function App() {
  return (
    <div className="flex h-screen flex-col overflow-hidden bg-[#d4cfca] font-['Liberation_Sans',Arial,sans-serif] text-black">
      <header className="shrink-0 pt-[3px]">
        <div className="flex h-[11px] items-center gap-[2px] bg-linear-to-r from-[#0a246a] to-[#a6caf0] px-[2px] text-white">
          <svg viewBox="0 0 10 10" className="h-[10px] w-[10px]" aria-hidden="true">
            <path d="M1 3 H9 V10 H1Z" fill="#f4f4f4" />
            <path d="M2 5 H4 V9 H2Z M6 5 H8 V9 H6Z" fill="#444" />
            <path d="M4 0 H6 V4 H7 L5 7 L3 4 H4Z" fill="#e01818" />
          </svg>
          <h1 className="flex-1 text-[7px] leading-none font-bold">EingabeModul [Faltwerk: Brücke 2]</h1>
          <div className="flex gap-px">
            <Btn label="Minimieren" className="h-[9px] w-[10px]"><Ico className="h-[7px] w-[7px]"><path d="M2 13 H11" strokeWidth="3" /></Ico></Btn>
            <Btn label="Maximieren" className="h-[9px] w-[10px]"><Ico className="h-[7px] w-[7px]"><path d="M2 2 H14 V14 H2Z M2 4 H14" strokeWidth="2" /></Ico></Btn>
            <Btn label="Schließen" className="h-[9px] w-[10px]"><Ico className="h-[7px] w-[7px]"><path d="M2 2 L14 14 M14 2 L2 14" strokeWidth="3" /></Ico></Btn>
          </div>
        </div>
        <nav className="flex h-[13px] items-center gap-[6px] px-1 text-[7px] leading-none text-[#111]">
          {menus.map((m) => (
            <button type="button" key={m}>{m}</button>
          ))}
        </nav>
        <div role="toolbar" aria-label="Werkzeuge" className="flex h-6 items-center gap-[5px] px-[2px]">
          {toolGroups.map((g, i) => (
            <div key={i} className="flex gap-[2px]">
              {g.map(([name, label, off]) => (
                <Btn key={name} label={label} off={off} className="h-[21px] w-5">
                  <Ico className="h-[17px] w-[17px]">{icons[name]}</Ico>
                </Btn>
              ))}
            </div>
          ))}
        </div>
      </header>

      <main className="flex min-h-0 flex-1 border-y border-[#6b6863]">
        <div className="flex w-[127px] shrink-0 flex-col border-r border-[#6b6863] pt-[2px] pl-[2px]">
          <div className="flex min-h-0 flex-1">
            <div className="min-w-0 flex-1 overflow-hidden border-t border-l border-[#6b6863] bg-[#fffbee]">
              <Tree />
            </div>
            <VScroll />
            <span className="w-[2px] shrink-0" />
          </div>
          <div className="mr-3 flex h-[10px] shrink-0 items-center">
            <Btn label="Nach links blättern" className="h-[9px] w-[9px]"><Arrow dir="left" /></Btn>
            <span className={`h-[8px] w-9 ${RAISED}`} />
            <span className="h-[2px] flex-1 bg-[#777]" />
            <Btn label="Nach rechts blättern" className="h-[9px] w-[9px]"><Arrow dir="right" /></Btn>
          </div>
        </div>

        <div className="flex min-w-0 flex-1 flex-col border-r border-[#8a8781] pt-[2px] pr-[2px] pl-1">
          <div className="flex min-h-0 flex-1">
            <div className="min-w-0 flex-1 overflow-hidden border-t border-l border-[#6b6863] bg-[#fffbee]">
              <Model />
            </div>
            <VScroll />
          </div>
          <div className="mr-[11px] flex h-[11px] shrink-0 items-center border-t border-[#eeebe6]">
            <Btn label="Ansicht nach links" off className="h-[10px] w-[9px]"><Arrow dir="left" off /></Btn>
            <span className="h-[8px] flex-1 border-y border-t-[#e8e5e0] border-b-[#aaa7a1] bg-[#cbc7c0]" />
            <Btn label="Ansicht nach rechts" off className="h-[10px] w-[9px]"><Arrow dir="right" off /></Btn>
          </div>
        </div>

        <div className="flex w-[14px] shrink-0 flex-col items-center border-l border-white pt-[2px]">
          <Btn label="Schnitt oben" className="h-[10px] w-[9px]"><Ico className="h-2 w-2"><path d="M2 2 H14 M8 3 V14 M4 10 L8 15 L12 10Z" fill="#111" strokeWidth="2" /></Ico></Btn>
          <span className="w-[5px] flex-1 bg-[#00f400]" />
          <Btn label="Schnitt unten" className="h-[10px] w-[9px]"><Ico className="h-2 w-2"><path d="M2 14 H14 M8 2 V13 M4 6 L8 1 L12 6Z" fill="#111" strokeWidth="2" /></Ico></Btn>
        </div>
        <div className="pt-[3px]">
          <Panel />
        </div>
      </main>

      <footer className="flex h-[17px] shrink-0 items-center gap-[3px] border-t border-white px-[2px] pt-[2px]">
        <button type="button" className={`flex h-[13px] w-[37px] items-center gap-[2px] pl-[2px] text-[8px] leading-none font-bold ${RAISED}`}>
          <svg viewBox="0 0 12 10" className="h-[9px] w-[11px]" aria-hidden="true">
            <ellipse cx="6" cy="5" rx="5.5" ry="4.5" fill="#5a5a10" />
            <path d="M1 5 H5 L3 2 M6 1 V4 L9 2 M11 5 H8 L9 8 M6 9 V6 L3 8" stroke="#e8e040" strokeWidth="1.2" fill="none" />
          </svg>
          Start
        </button>
        <span className="h-[12px] flex-1 border border-t-[#77746f] border-l-[#77746f] border-r-white border-b-white bg-[#e4e2de]" />
      </footer>
    </div>
  );
}
